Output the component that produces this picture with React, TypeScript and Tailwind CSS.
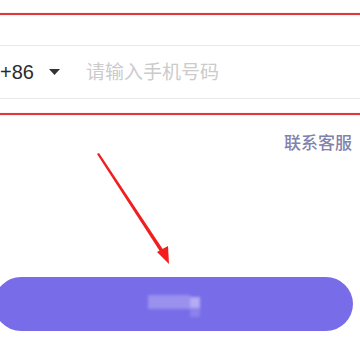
import React from "react";

const App: React.FC = () => {
  return (
    <div className="relative w-[360px] h-[360px] overflow-hidden bg-white font-['Liberation_Sans','Noto_Sans_CJK_SC',sans-serif]">
      {/* top red marker */}
      <div className="pt-[13px]">
        <div className="h-[2px] bg-[#e0393b] shadow-[0_0_1px_#f08080]" />
      </div>

      {/* phone input row */}
      <div className="mt-[30px] h-px bg-[#e8e8e8]" />
      <div className="flex h-[52px] items-center">
        <span className="text-[20px] leading-none text-[#2b2b2b]">+86</span>
        <svg className="ml-[15px]" width="11" height="6" viewBox="0 0 11 6">
          <polygon points="0,0 11,0 5.5,6" fill="#333" />
        </svg>
        <span className="ml-[26px] text-[19px] leading-none text-[#cbcbcb]">请输入手机号码</span>
      </div>
      <div className="h-px bg-[#e8e8e8]" />

      {/* bottom red marker */}
      <div className="mt-[14px] h-[2px] bg-[#e0393b] shadow-[0_0_1px_#f08080]" />

      {/* contact link */}
      <div className="mt-[20px] flex justify-end pr-[8px]">
        <span className="text-[17px] leading-none font-medium text-[#8282ac]">联系客服</span>
      </div>

      {/* submit button */}
      <div className="mt-[125px] -ml-[6px] mr-[7px] flex h-[54px] items-center justify-center rounded-full bg-[#786ce8]">
        <div className="relative ml-[4px] h-[26px] w-[56px] blur-[1.5px]">
          <div className="absolute left-0 top-[4px] h-[14px] w-[42px] bg-[#9a90ee]" />
          <div className="absolute left-[42px] top-[6px] h-[11px] w-[10px] bg-[#b3abf4]" />
          <div className="absolute left-[42px] top-[17px] h-[9px] w-[10px] bg-[#8c82ec]" />
        </div>
      </div>

      {/* red annotation arrow */}
      <svg className="absolute left-0 top-0" width="360" height="360" viewBox="0 0 360 360">
        <polygon points="97,154 99,153 164,251 161,253" fill="#f01e1e" />
        <polygon points="157,252 168,246 169,264" fill="#f01e1e" />
      </svg>
    </div>
  );
};

export default App;
